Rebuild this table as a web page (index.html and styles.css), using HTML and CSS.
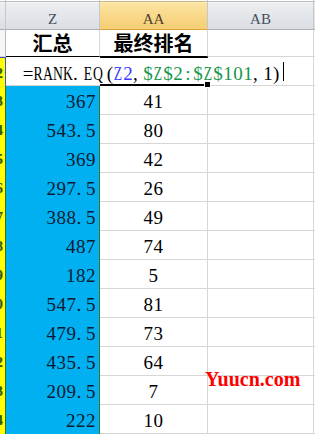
FILE: index.html
```html
<!DOCTYPE html>
<html lang="zh">
<head>
<meta charset="utf-8">
<title>Sheet</title>
<link rel="stylesheet" href="styles.css">
</head>
<body>
<div class="sheet">
  <div class="hd corner"></div>
  <div class="hd">Z</div>
  <div class="hd sel">AA</div>
  <div class="hd">AB</div>
  <div class="hd end"></div>

  <div class="rh0"></div>
  <div class="t">汇总</div>
  <div class="t">最终排名</div>
  <div class="g"></div>
  <div class="last"></div>

  <div class="rh yel act">2</div>
  <div class="edit"><i class="k">=</i><i class="k u">R</i><i class="k u">A</i><i class="k u">N</i><i class="k u">K</i><i class="k l">.</i><i class="k u">E</i><i class="k u">Q</i><i class="k r">(</i><i class="k u b">Z</i><i class="k b">2</i><i class="k l">,</i><i class="k gr">$</i><i class="k u gr">Z</i><i class="k gr">$</i><i class="k gr">2</i><i class="k gr">:</i><i class="k gr">$</i><i class="k u gr">Z</i><i class="k gr">$</i><i class="k gr">1</i><i class="k gr">0</i><i class="k gr">1</i><i class="k l">,</i><i class="k">1</i><i class="k l">)</i><span class="caret"></span></div>
  <div class="aa2"></div>
  <div class="g"></div>
  <div class="last"></div>

  <div class="rh yel">3</div><div class="z num">367</div><div class="aa num">41</div><div class="g"></div><div class="last"></div>
  <div class="rh yel">4</div><div class="z num">543<span class="d">.</span>5</div><div class="aa num">80</div><div class="g"></div><div class="last"></div>
  <div class="rh yel">5</div><div class="z num">369</div><div class="aa num">42</div><div class="g"></div><div class="last"></div>
  <div class="rh yel">6</div><div class="z num">297<span class="d">.</span>5</div><div class="aa num">26</div><div class="g"></div><div class="last"></div>
  <div class="rh yel">7</div><div class="z num">388<span class="d">.</span>5</div><div class="aa num">49</div><div class="g"></div><div class="last"></div>
  <div class="rh yel">8</div><div class="z num">487</div><div class="aa num">74</div><div class="g"></div><div class="last"></div>
  <div class="rh yel">9</div><div class="z num">182</div><div class="aa num">5</div><div class="g"></div><div class="last"></div>
  <div class="rh yel">10</div><div class="z num">547<span class="d">.</span>5</div><div class="aa num">81</div><div class="g"></div><div class="last"></div>
  <div class="rh yel">11</div><div class="z num">479<span class="d">.</span>5</div><div class="aa num">73</div><div class="g"></div><div class="last"></div>
  <div class="rh yel">12</div><div class="z num">435<span class="d">.</span>5</div><div class="aa num">64</div><div class="g"></div><div class="last"></div>
  <div class="rh yel">13</div><div class="z num">209<span class="d">.</span>5</div><div class="aa num">7</div><div class="g"></div><div class="last"></div>
  <div class="rh yel">14</div><div class="z num">222</div><div class="aa num">10</div><div class="g"></div><div class="last"></div>
</div>
<div class="mark">Yuucn.com</div>
</body>
</html>
```

FILE: styles.css
```css
html, body {
  margin: 0;
  padding: 0;
}
body {
  width: 315px;
  height: 434px;
  overflow: hidden;
  background: #ffffff;
  font-family: "Liberation Serif", serif;
  position: relative;
  color: #000;
}
.sheet {
  display: grid;
  grid-template-columns: 6px 94px 108px 106px 1fr;
  grid-template-rows: 30px 27px 29px repeat(12, 29px);
}
.sheet > div {
  box-sizing: border-box;
  min-width: 0;
}

/* column headers */
.hd {
  background: linear-gradient(to bottom, #ffffff 0 1px, #b9bdc3 1px 2px, #f4f5f7 2px 3px, #eceef1 3px, #e2e5e9 60%, #dadee3);
  border-right: 1px solid #c4c8ce;
  border-bottom: 1px solid #a9b0b9;
  font-size: 15px;
  line-height: 19px;
  padding-top: 10px;
  text-align: center;
  color: #46505c;
}
.hd.sel {
  background: linear-gradient(to bottom, #ffffff 0 1px, #c9b27c 1px 2px, #fdeeb9 2px 3px, #fbe4a2 3px, #f9d889 55%, #f6ce73);
  border-bottom-color: #dba33f;
  color: #4a3f2c;
}
.hd.end {
  border-right: none;
}

/* row 1 */
.rh0 {
  background: #f5f6f8;
  border-right: 1px solid #b4bac2;
  border-bottom: 1px solid #d6d6d6;
}
.t {
  font-family: "Noto Sans CJK SC", sans-serif;
  font-weight: 700;
  font-size: 20px;
  line-height: 26px;
  text-align: center;
  border-right: 1px solid #d6d6d6;
  border-bottom: 1px solid #000000;
}

/* gridline cells */
.g {
  border-right: 1px solid #d6d6d6;
  border-bottom: 1px solid #d6d6d6;
}
.last {
  border-bottom: 1px solid #d6d6d6;
}

/* row headers */
.rh {
  display: flex;
  justify-content: flex-end;
  overflow: hidden;
  padding-right: 2px;
  font-size: 15px;
  line-height: 25px;
  padding-top: 3px;
  color: #2f5a12;
  font-weight: 700;
}
.yel {
  background: #ffff00;
  border-right: 1px solid #3b6b2f;
}
.act {
  border-top: 1px solid #3557c8;
  border-right: 1px solid #3557c8;
}

/* edit cell */
.edit {
  display: flex;
  align-items: baseline;
  white-space: nowrap;
  overflow: visible;
  padding-left: 17px;
  padding-top: 4px;
  position: relative;
  z-index: 1;
  border-bottom: 1px solid #d6d6d6;
}
.k {
  display: flex;
  justify-content: center;
  flex-shrink: 0;
  width: 10px;
  font-style: normal;
  font-size: 19px;
  line-height: 25px;
}
.k.l { justify-content: flex-start; }
.k.r { justify-content: flex-end; }
.k.u { transform: scaleX(0.72); }
.k.b { color: #3b3bff; }
.k.gr { color: #16964a; }
.caret {
  display: inline-block;
  flex-shrink: 0;
  width: 1px;
  height: 19px;
  background: #000;
  align-self: center;
  margin-top: -3px;
}

.aa2 {
  border-top: 1px solid #000;
  border-bottom: 2px solid #000;
  position: relative;
}
.aa2::after {
  content: "";
  position: absolute;
  right: -3px;
  bottom: -4px;
  width: 5px;
  height: 5px;
  background: #000;
  border: 1px solid #fff;
  z-index: 2;
}

/* data */
.num {
  font-size: 19px;
  line-height: 25px;
  padding-top: 3px;
  letter-spacing: 0.5px;
  white-space: nowrap;
}
.d {
  display: inline-block;
  width: 9.5px;
  text-align: left;
}
.z {
  background: #00b0f0;
  border-right: 1px solid #2b7a33;
  text-align: right;
  padding-right: 3px;
  color: #0d1a33;
}
.aa {
  text-align: center;
  border-right: 1px solid #d6d6d6;
  border-bottom: 1px solid #d6d6d6;
}

/* watermark overlay */
.mark {
  position: absolute;
  left: 205px;
  top: 369px;
  font-family: "Liberation Serif", serif;
  font-weight: 700;
  font-size: 20px;
  line-height: 20px;
  color: #ff0000;
}
```
